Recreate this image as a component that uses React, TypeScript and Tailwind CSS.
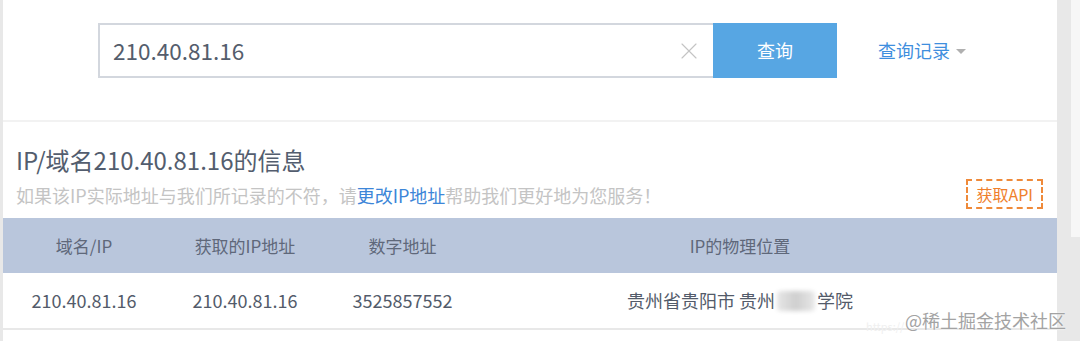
import { X } from 'lucide-react';

const font = { fontFamily: '"Noto Sans CJK SC", "Noto Sans", sans-serif' };

export default function App() {
  return (
    <div className="relative flex h-[341px] w-[1080px] overflow-hidden bg-[#e8e8e8]" style={font}>
      <div className="ml-[3px] flex w-[1054px] flex-col bg-white">
        {/* search bar */}
        <div className="flex h-[120px] items-start pl-[95px] pt-[23px]">
          <div className="flex h-[55px] w-[615px] items-center border-2 border-r-0 border-[#d3d7de] pl-[13px] pr-[10px]">
            <span className="flex-1 text-[22.5px] text-[#545d6c]">210.40.81.16</span>
            <X className="h-[28px] w-[28px] text-[#c4c4c4]" strokeWidth={1} />
          </div>
          <button className="h-[55px] w-[124px] bg-[#57a6e3] text-[18px] text-white">查询</button>
          <div className="ml-[41px] flex h-[55px] items-center gap-[6px] text-[18px] text-[#3f8fde]">
            <span>查询记录</span>
            <span className="mt-[2px] h-0 w-0 border-x-[5px] border-t-[5px] border-x-transparent border-t-[#b0b0b0]" />
          </div>
        </div>
        <div className="h-[2px] bg-[#f2f2f2]" />

        {/* title */}
        <div className="flex h-[96px] items-end justify-between pb-[9px] pl-[13px] pr-[14px]">
          <div className="flex flex-col pb-[3px]">
            <h1 className="text-[24px] leading-[30px] text-[#535d6e]">IP/域名210.40.81.16的信息</h1>
            <p className="mt-[9px] text-[18px] leading-[22px] text-[#c4c4c4]">
              如果该IP实际地址与我们所记录的不符，请<span className="text-[#3d86d8]">更改IP地址</span>帮助我们更好地为您服务！
            </p>
          </div>
          <div className="flex h-[30px] items-center border-2 border-dashed border-[#ef8a3a] px-[8px] text-[16px] text-[#ef7f2c]">
            获取API
          </div>
        </div>

        {/* table */}
        <div className="grid h-[55px] grid-cols-[162px_160px_155px_520px_1fr] items-center bg-[#b9c6dc] text-center text-[17px] text-[#5f687a]">
          <span>域名/IP</span>
          <span>获取的IP地址</span>
          <span>数字地址</span>
          <span>IP的物理位置</span>
          <span />
        </div>
        <div className="grid h-[57px] grid-cols-[162px_160px_155px_520px_1fr] items-center border-b-2 border-[#e8e8e8] text-center text-[18px] text-[#535b6a]">
          <span>210.40.81.16</span>
          <span>210.40.81.16</span>
          <span>3525857552</span>
          <span className="flex items-center justify-center">
            贵州省贵阳市 贵州
            <span className="mx-[2px] h-[20px] w-[38px] rounded-sm bg-gradient-to-r from-[#e6e6e6] via-[#cfcfcf] to-[#e8e8e8] blur-[2px]" />
            学院
          </span>
          <span />
        </div>
      </div>

      {/* scrollbar */}
      <div className="ml-[14px] h-[237px] w-[9px] bg-[#f7f7f7]" />

      {/* watermark */}
      <div className="absolute left-[866px] top-[321px] text-[11px] leading-none text-[#f0f0f0]">https://</div>
      <div className="absolute left-[905px] top-[311px] text-[18px] leading-none text-[#a3a3a3]" style={{ textShadow: '0 0 2px #fff' }}>
        @稀土掘金技术社区
      </div>
    </div>
  );
}
